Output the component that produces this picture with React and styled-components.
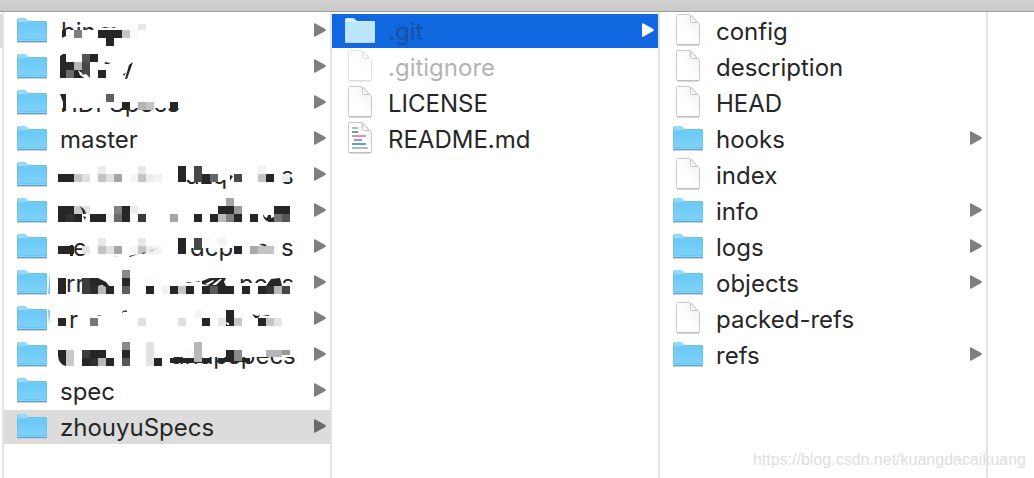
import React, { useState } from 'react';
import styled, { createGlobalStyle } from 'styled-components';

const GlobalStyle = createGlobalStyle`
    * {
        box-sizing: border-box;
    }

    body {
        margin: 0;
        background-color: #fff;
        color: #262626;
        font-family: Inter, "Liberation Sans", sans-serif;
    }
`;

const Window = styled.div`
    position: relative;
    display: flex;
    flex-direction: column;
    min-height: 100vh;
    overflow: hidden;
`;

const TitleBar = styled.header`
    height: 12px;
    background: linear-gradient(#d0d0d0, #cacaca);
    border-bottom: 1px solid #9c9c9c;
`;

const Browser = styled.main`
    flex: 1;
    display: grid;
    grid-template-columns: 4px repeat(3, minmax(0, 1fr)) 46px;
`;

const Column = styled.ul`
    display: flex;
    flex-direction: column;
    gap: 2px;
    margin: 0;
    padding: 2px 0 0;
    list-style: none;
    border-right: 2px solid #e4e4e4;
`;

const ParentRow = styled.li`
    height: 34px;
    background-color: #dcdcdc;
`;

const rowColors = {
    active: '#1067df',
    open: '#dcdcdc',
};

const Row = styled.button`
    display: flex;
    align-items: center;
    gap: 12px;
    width: 100%;
    height: 34px;
    padding: 0 4px 0 12px;
    border: none;
    background-color: ${({ $state }) => rowColors[$state] || 'transparent'};
    color: inherit;
    font: inherit;
    text-align: left;
    cursor: pointer;
`;

const Name = styled.span`
    flex: 1;
    padding-top: 2px;
    font-size: 24px;
    line-height: 32px;
    white-space: nowrap;
    opacity: ${({ $dim }) => ($dim ? 0.35 : 1)};
`;

const Icon = styled.svg`
    flex: none;
    width: 32px;
    height: 34px;
    opacity: ${({ $dim }) => ($dim ? 0.5 : 1)};
`;

const ArrowIcon = styled.svg`
    flex: none;
    width: 12px;
    height: 14px;
    margin-bottom: 2px;
    fill: ${({ $state }) => ($state === 'active' ? '#fff' : $state === 'open' ? '#6a6a6a' : '#7f7f7f')};
`;

const MosaicArt = styled.svg`
    flex: 1;
    min-width: 0;
    height: 34px;
    margin-left: -2px;
    overflow: visible;
    font-size: 24px;
    fill: #262626;
`;

const Watermark = styled.a`
    position: absolute;
    right: 8px;
    bottom: 8px;
    color: #dedede;
    font-family: "Liberation Sans", Arial, sans-serif;
    font-size: 16px;
    line-height: 20px;
    text-decoration: none;
`;

const D = '#262626';

// cells: [column, y, shade, columns, height], scraps: [x, text, from, to]
const mosaics = {
    r1: {
        cells: [[2, 16, '#7f7f7f'], [5, 16, D, 3], [8, 16, '#c4c4c4'], [9, 16, '#fafafa'], [6, 24, D], [10, 10, '#e8e8e8', 1, 6]],
        scraps: [[3, 'bin', 0, 16]],
        marks: ['M4 16h4v6l-4 2z', 'M43 14l4-1 5 1zM53 14l3-1 2 1z'],
    },
    r2: {
        cells: [[1, 12, '#2a2a2a'], [1, 20, '#6a6a6a'], [2, 12, '#b5b5b5'], [2, 20, D], [3, 4, '#555'], [3, 12, '#484848', 1, 16], [4, 4, D], [5, 20, D]],
        marks: ['M2 6l3-2h3v24H2z', 'M46 13l2-1 3 1 2-1-2 2h-3z', 'M75 12l-6 17h-2l4-14z', 'M65 24l3-1-2 3z'],
        holes: ['M20 20l4 3 1 4-3-2zM24 25l4-1 4 4h-6z'],
    },
    r3: {
        cells: [[6, 8, '#606060'], [8, 16, D], [10, 16, '#b5b5b5'], [11, 16, '#c4c4c4'], [14, 16, D]],
        scraps: [[2, 'HDFSpecs', 22, 34]],
        marks: ['M2 8h6v17H5v-9z'],
    },
    r5: {
        cells: [
            [0, 16, D, 2], [2, 16, '#c4c4c4'], [3, 16, '#e0e0e0'], [5, 8, '#ececec'], [5, 16, '#c4c4c4'], [6, 16, '#e2e2e2'],
            [7, 16, '#a6a6a6'], [9, 16, '#f5f5f5'], [10, 8, '#e8e8e8'], [10, 16, '#c4c4c4'], [11, 16, '#ececec'], [12, 16, '#f2f2f2'],
            [15, 8, D, 1, 16], [17, 8, '#484848', 1, 16], [18, 16, D], [19, 16, '#666'], [22, 16, '#484848'],
            [25, 8, '#f2f2f2'], [25, 16, '#c4c4c4'], [26, 16, D], [28, 16, '#ebebeb'],
        ],
        scraps: [[127, 'dzq', 22, 34], [223, 's', 0, 34]],
        marks: ['M172 17l3 1-3 5z'],
    },
    r6: {
        cells: [
            [0, 12, D, 2], [2, 12, '#c8c8c8'], [3, 12, '#e0e0e0'], [0, 20, D], [1, 20, '#323232'], [2, 20, D],
            [4, 20, D, 2], [6, 20, '#f5f5f5'], [7, 12, '#808080'], [7, 20, '#6a6a6a'], [8, 12, D, 1, 16], [9, 12, '#ededed'],
            [10, 20, '#3a3a3a'], [14, 20, '#a6a6a6'], [17, 20, D], [19, 20, D], [21, 4, '#a6a6a6'], [20, 12, D, 2],
            [22, 12, '#999'], [20, 20, '#bbb'], [21, 20, '#808080'], [22, 20, D], [24, 20, D],
            [27, 12, D, 2], [27, 20, '#777'], [28, 20, '#555'],
        ],
        marks: ['M22 13q5 1 6 7h-3q0-4-3-7zM25 22l3 1-1 3z', 'M205 20q1 3 4 4l1-3h3v3l3-1v5h-5q-6-2-6-8z'],
    },
    r7: {
        cells: [
            [0, 16, D, 2], [3, 16, '#e4e4e4'], [5, 8, '#e8e8e8'], [5, 16, '#c4c4c4'], [6, 16, '#e2e2e2'], [7, 16, '#a6a6a6'],
            [9, 16, '#f5f5f5'], [10, 8, '#e8e8e8'], [10, 16, '#c4c4c4'], [11, 16, '#ececec'], [12, 16, '#f5f5f5'],
            [15, 8, D, 1, 16], [17, 8, '#484848', 1, 12], [18, 8, '#fafafa'], [20, 8, '#f3f3f3'], [22, 16, D],
            [24, 16, '#a9a9a9'], [25, 16, '#c4c4c4', 2],
        ],
        scraps: [[15, 'e', 0, 34], [132, 'dcp', 18, 34], [223, 's', 0, 34]],
        marks: ['M12 15h3v11h-3z', 'M201 15q5-3 8 1h-3q-2-1-5-1z', 'M56 27l6-1-5 1zM71 26l9-2-8 3zM84 23l4-1-3 2zM92 21l8-3-7 3z'],
    },
    r8: {
        cells: [
            [0, 12, D, 1, 16], [3, 12, '#3c3c3c', 1, 16], [4, 12, D], [4, 20, '#2e2e2e'], [5, 20, '#b8b8b8'], [6, 20, D],
            [8, 4, '#888'], [8, 12, D], [8, 20, '#606060'], [11, 12, '#fafafa'], [11, 20, D], [13, 20, '#f2f2f2'], [14, 20, D],
            [15, 20, '#c4c4c4'], [16, 20, D], [18, 20, D], [19, 20, '#5a5a5a'], [20, 20, D, 2], [23, 20, D],
            [25, 20, D], [26, 20, '#363636'], [27, 20, '#b8b8b8'], [28, 20, '#464646'],
        ],
        scraps: [[8, 'rr', 0, 26], [181, 'pecs', 11, 17]],
        marks: ['M40 12l8 4 4 5h-4l-4-2-4 1z', 'M127 17l4-1 3 1zM137 16l5-1-1 1z', 'M144 15l8-3h16l-2 4 2 4h-16l-8-2z', 'M208 20l5-7 9-1 2 8z'],
        holes: ['M147 18l8-4 1 1-6 4zM154 19l8-6h2l-6 6z'],
        edge: 'M-8 4v24h-2z',
    },
    r9: {
        cells: [
            [0, 16, D], [4, 16, '#777'], [10, 16, '#e0e0e0'], [15, 16, '#dedede'], [17, 8, '#f4f4f4'], [18, 16, D],
            [20, 16, '#e6e6e6'], [21, 8, D, 1, 16], [22, 16, '#c6c6c6'], [25, 16, D], [26, 16, '#c4c4c4'], [27, 16, '#e4e4e4'],
        ],
        scraps: [[11, 'r', 0, 34]],
        marks: ['M64 10q3-3 5-1v1q-3-1-5 1z', 'M38 14l5-1-1 1z', 'M194 12l5 2 3-1-2 3h-3zM204 14l6-1 2 1z'],
        holes: ['M168 20l3 1v2h-2z'],
        edge: 'M-10 8h2v6l-1 9z',
    },
    r10: {
        cells: [
            [1, 12, '#c8c8c8', 1, 16], [3, 12, '#3c3c3c'], [4, 12, D, 2], [3, 20, D], [4, 20, '#303030'], [5, 20, '#b8b8b8'], [6, 20, D],
            [8, 4, '#888'], [8, 12, D], [8, 20, '#555'], [11, 4, '#e2e2e2', 1, 24], [12, 20, D], [14, 20, D, 5, 5],
            [16, 12, '#fafafa'], [17, 4, '#b8b8b8', 1, 20], [20, 20, D, 4, 4], [21, 12, D], [22, 12, '#8c8c8c', 1, 11],
            [26, 12, '#b5b5b5', 2, 7], [28, 12, '#999', 1, 5],
        ],
        scraps: [[113, 'andpspecs', 19, 34]],
        marks: ['M0 12h8v16Q0 26 0 17z'],
    },
};

const rootItems = [
    { id: 'r1', kind: 'folder' },
    { id: 'r2', kind: 'folder' },
    { id: 'r3', kind: 'folder' },
    { id: 'master', kind: 'folder', name: 'master' },
    { id: 'r5', kind: 'folder' },
    { id: 'r6', kind: 'folder' },
    { id: 'r7', kind: 'folder' },
    { id: 'r8', kind: 'folder' },
    { id: 'r9', kind: 'folder' },
    { id: 'r10', kind: 'folder' },
    { id: 'spec', kind: 'folder', name: 'spec' },
    { id: 'zhouyuSpecs', kind: 'folder', name: 'zhouyuSpecs' },
];

const repoItems = [
    { id: '.git', kind: 'folder', name: '.git', hidden: true },
    { id: '.gitignore', kind: 'file', name: '.gitignore', hidden: true },
    { id: 'LICENSE', kind: 'file', name: 'LICENSE' },
    { id: 'README.md', kind: 'markdown', name: 'README.md' },
];

const gitItems = [
    { id: 'config', kind: 'file', name: 'config' },
    { id: 'description', kind: 'file', name: 'description' },
    { id: 'HEAD', kind: 'file', name: 'HEAD' },
    { id: 'hooks', kind: 'folder', name: 'hooks' },
    { id: 'index', kind: 'file', name: 'index' },
    { id: 'info', kind: 'folder', name: 'info' },
    { id: 'logs', kind: 'folder', name: 'logs' },
    { id: 'objects', kind: 'folder', name: 'objects' },
    { id: 'packed-refs', kind: 'file', name: 'packed-refs' },
    { id: 'refs', kind: 'folder', name: 'refs' },
];

const Folder = ({ pale }) => (
    <Icon viewBox="0 0 32 34" aria-hidden="true">
        <path d="M1 28.5h30" stroke="#d9cdc8" strokeWidth="1" />
        <path d="M1 27V5.500Q1 4 2.500 4h6.500q1 0 1.800 1l1.200 1.200q.6.8 1.600.8H30q1 0 1 1v19q0 1-1 1H2q-1 0-1-1z" fill={pale ? '#d3effd' : '#93dafa'} />
        <path d="M1 8h30v19q0 1-1 1H2q-1 0-1-1z" fill={pale ? '#b9e6fb' : 'url(#folderFront)'} />
        {!pale && (
            <>
                <path d="M12 7.500h18" stroke="#6cbfe6" strokeWidth="1" />
                <path d="M2 8.500h28" stroke="#7cccf0" strokeWidth="1" />
                <path d="M1.500 5v22M30.500 8v19M2 25.500h28" stroke="#69bfe8" strokeWidth="1" opacity="0.6" />
                <path d="M1.500 27.500h29" stroke="#55a8d0" strokeWidth="1" />
            </>
        )}
    </Icon>
);

const File = ({ dim, markdown }) => (
    <Icon viewBox="0 0 32 34" $dim={dim} aria-hidden="true">
        <path d="M4.500 1.500Q4.500.5 5.500.5H18l9.500 9.500v19.500q0 1-1 1h-21q-1 0-1-1z" fill="url(#paper)" stroke="#c9c9c9" strokeWidth="1" />
        <path d="M5 31h22" stroke="#b5b5b5" strokeWidth="1" />
        <path d="M18.500 1v6.500q0 1 1 1H25z" fill="#fff" stroke="#c4c4c4" strokeWidth="1" />
        {markdown && (
            <g strokeWidth="2">
                <path d="M8 6h6" stroke="#b8b8b8" />
                <path d="M8 10h6M8 22h14" stroke="#55a9b8" />
                <path d="M8 14h14" stroke="#dc929c" />
                <path d="M10 18h8" stroke="#ab80ff" />
                <path d="M8 26h16" stroke="#b8b8b8" />
            </g>
        )}
    </Icon>
);

const Mosaic = ({ cells = [], scraps = [], marks = [], holes = [], edge }) => (
    <MosaicArt aria-hidden="true">
        {scraps.map(([x, text, from, to]) => (
            <svg key={text + x} y={from} width="240" height={to - from}>
                <text x={x} y={26 - from}>{text}</text>
            </svg>
        ))}
        {cells.map(([col, y, shade, cols = 1, height = 8]) => (
            <rect key={`${col}-${y}`} x={col * 8} y={y} width={cols * 8} height={height} fill={shade} />
        ))}
        {marks.map((d) => <path key={d} d={d} />)}
        {holes.map((d) => <path key={d} d={d} fill="#fff" />)}
        {edge && <path d={edge} fill="#7cc9ee" />}
    </MosaicArt>
);

const Item = ({ item, state, onSelect }) => (
    <li>
        <Row
            type="button"
            $state={state}
            aria-label={item.name || 'Folder'}
            onClick={() => onSelect(item.id)}
        >
            {item.kind === 'folder'
                ? <Folder pale={state === 'active'} />
                : <File dim={item.hidden} markdown={item.kind === 'markdown'} />}
            {item.name
                ? <Name $dim={item.hidden}>{item.name}</Name>
                : <Mosaic {...mosaics[item.id]} />}
            {item.kind === 'folder' && (
                <ArrowIcon $state={state} viewBox="0 0 12 14" aria-hidden="true">
                    <path d="M0 1Q0 0 1 .3l10.300 5.700q1 1 0 2L1 13.700Q0 14 0 13z" />
                </ArrowIcon>
            )}
        </Row>
    </li>
);

const App = () => {
    const [rootSelected, setRootSelected] = useState('zhouyuSpecs');
    const [repoSelected, setRepoSelected] = useState('.git');
    const [gitSelected, setGitSelected] = useState(null);

    const columns = [
        { id: 'root', items: rootItems, selected: rootSelected, onSelect: setRootSelected, state: 'open' },
        { id: 'repo', items: repoItems, selected: repoSelected, onSelect: setRepoSelected, state: 'active' },
        { id: 'git', items: gitItems, selected: gitSelected, onSelect: setGitSelected, state: 'active' },
    ];

    return (
        <Window>
            <GlobalStyle />
            <TitleBar />
            <Browser>
                <Column>
                    <ParentRow />
                </Column>
                {columns.map(({ id, items, selected, onSelect, state }) => (
                    <Column key={id}>
                        {items.map((item) => (
                            <Item
                                key={item.id}
                                item={item}
                                state={item.id === selected ? state : undefined}
                                onSelect={onSelect}
                            />
                        ))}
                    </Column>
                ))}
            </Browser>
            <Watermark href="https://blog.csdn.net/kuangdacaikuang">
                https://blog.csdn.net/kuangdacaikuang
            </Watermark>
            <svg width="0" height="0" aria-hidden="true">
                <defs>
                    <linearGradient id="folderFront" x1="0" y1="0" x2="0" y2="1">
                        <stop offset="0" stopColor="#69c8f5" />
                        <stop offset="1" stopColor="#82d3f9" />
                    </linearGradient>
                    <linearGradient id="paper" x1="1" y1="0" x2="0.400" y2="0.600">
                        <stop offset="0" stopColor="#f1f1f1" />
                        <stop offset="1" stopColor="#fff" />
                    </linearGradient>
                </defs>
            </svg>
        </Window>
    );
};

export default App;
